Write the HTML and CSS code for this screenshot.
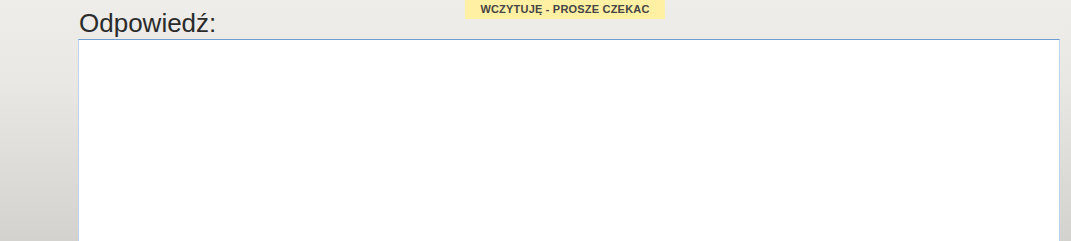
FILE: index.html
```html
<!DOCTYPE html>
<html lang="pl">
<head>
<meta charset="utf-8">
<link rel="stylesheet" href="styles.css">
</head>
<body>
<div class="loading">WCZYTUJĘ - PROSZE CZEKAC</div>
<main class="content">
  <label class="label" for="answer">Odpowiedź:</label>
  <textarea id="answer" class="answer"></textarea>
</main>
</body>
</html>
```
FILE: styles.css
```css
html, body {
  margin: 0;
  height: 100%;
}
body {
  background: linear-gradient(to bottom, #eeedea 0px, #e9e8e5 80px, #d3d2cf 241px);
  font-family: "Liberation Sans", Arial, sans-serif;
  overflow: hidden;
}
.loading {
  position: absolute;
  top: 0;
  left: 465px;
  width: 200px;
  height: 19px;
  background: #fff0a3;
  color: #454545;
  font-weight: bold;
  font-size: 11px;
  line-height: 19px;
  text-align: center;
  letter-spacing: 0.2px;
}
.content {
  display: flex;
  flex-direction: column;
  padding: 8px 0 0 78px;
  width: 982px;
}
.label {
  font-size: 26px;
  line-height: 30px;
  color: #2b2b2b;
  padding-left: 1px;
}
.answer {
  margin-top: 1px;
  height: 260px;
  box-sizing: border-box;
  width: 982px;
  background: #fff;
  border: 1px solid #bcd3ea;
  border-top-color: #6f9dd0;
  resize: none;
  outline: none;
}
```
